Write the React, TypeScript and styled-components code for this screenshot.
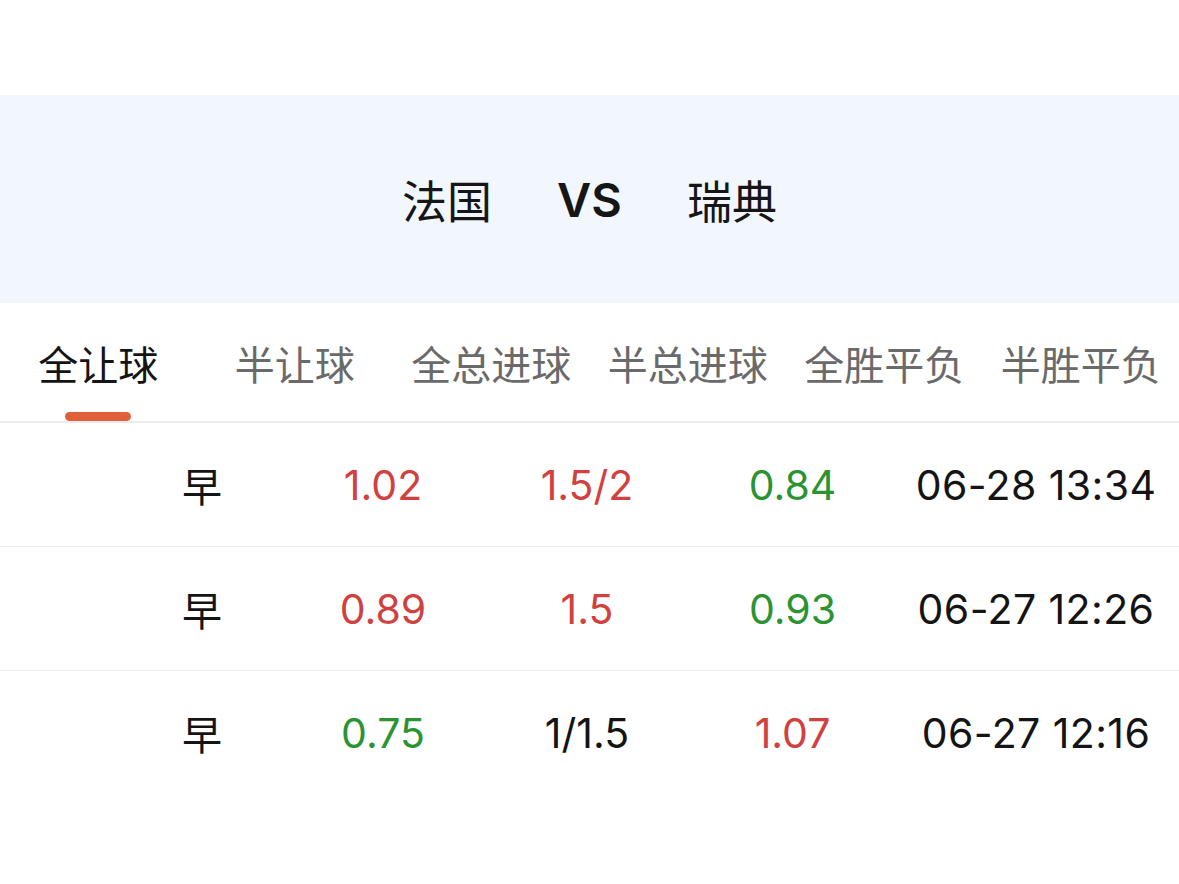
import styled, { createGlobalStyle } from 'styled-components';

const GlobalStyle = createGlobalStyle`
    body {
        margin: 0;
        background: #fff;
        font-family: Inter, "Noto Sans CJK SC", sans-serif;
        color: #111;
    }
`;

const Page = styled.div`
    width: 1179px;
    display: flex;
    flex-direction: column;
`;

const TopBar = styled.div`
    height: 95px;
`;

// Match header.

const MatchHeader = styled.header`
    height: 208px;
    background-color: #f2f7fd;
    display: flex;
    align-items: center;
    justify-content: center;
    gap: 65px;
`;

const TeamName = styled.span`
    font-family: "Noto Sans CJK SC", sans-serif;
    font-size: 45px;
    font-weight: 400;
    color: #161616;
`;

const Versus = styled.span`
    font-family: Inter, sans-serif;
    font-size: 47px;
    font-weight: 600;
    color: #161616;
`;

// Tabs.

const TabBar = styled.nav`
    display: flex;
    height: 120px;
    border-bottom: 2px solid #ececec;
    box-sizing: border-box;
`;

const Tab = styled.div`
    flex: 1;
    display: flex;
    flex-direction: column;
    align-items: center;
    padding-top: 40px;
`;

const TabLabel = styled.span<{ $active?: boolean }>`
    font-family: "Noto Sans CJK SC", sans-serif;
    font-size: 40px;
    line-height: 40px;
    white-space: nowrap;
    color: ${(p) => (p.$active ? '#141414' : '#6a6a6a')};
`;

const TabIndicator = styled.div<{ $active?: boolean }>`
    margin-top: 29px;
    width: 66px;
    height: 9px;
    border-radius: 5px;
    background-color: ${(p) => (p.$active ? '#e0603c' : 'transparent')};
`;

// Odds rows.

const OddsRow = styled.div`
    display: grid;
    grid-template-columns: 164px 198px 210px 201px 1fr;
    align-items: center;
    height: 124px;
    padding-left: 120px;
    border-bottom: 1px solid #ececec;
    box-sizing: border-box;

    &:last-child {
        border-bottom: none;
    }
`;

const Cell = styled.span<{ $tone?: 'red' | 'green' | 'plain' }>`
    text-align: center;
    font-family: Inter, "Noto Sans CJK SC", sans-serif;
    font-size: 41px;
    white-space: nowrap;
    color: ${(p) => (p.$tone === 'red' ? '#d0413f' : p.$tone === 'green' ? '#2b9332' : '#141414')};
`;

const Stage = styled(Cell)`
    font-family: "Noto Sans CJK SC", sans-serif;
    font-size: 40px;
`;

const Time = styled(Cell)`
    letter-spacing: 0.4px;
`;

type Tone = 'red' | 'green' | 'plain';

type Odds = {
    home: [string, Tone];
    line: [string, Tone];
    away: [string, Tone];
    time: string;
};

const tabs = ['全让球', '半让球', '全总进球', '半总进球', '全胜平负', '半胜平负'];

const rows: Odds[] = [
    { home: ['1.02', 'red'], line: ['1.5/2', 'red'], away: ['0.84', 'green'], time: '06-28 13:34' },
    { home: ['0.89', 'red'], line: ['1.5', 'red'], away: ['0.93', 'green'], time: '06-27 12:26' },
    { home: ['0.75', 'green'], line: ['1/1.5', 'plain'], away: ['1.07', 'red'], time: '06-27 12:16' },
];

const App = () => {
    return (
        <>
            <GlobalStyle />
            <Page>
                <TopBar />
                <MatchHeader>
                    <TeamName>法国</TeamName>
                    <Versus>VS</Versus>
                    <TeamName>瑞典</TeamName>
                </MatchHeader>

                <TabBar>
                    {tabs.map((t, i) => (
                        <Tab key={t}>
                            <TabLabel $active={i === 0}>{t}</TabLabel>
                            <TabIndicator $active={i === 0} />
                        </Tab>
                    ))}
                </TabBar>

                <div>
                    {rows.map((r) => (
                        <OddsRow key={r.time}>
                            <Stage>早</Stage>
                            <Cell $tone={r.home[1]}>{r.home[0]}</Cell>
                            <Cell $tone={r.line[1]}>{r.line[0]}</Cell>
                            <Cell $tone={r.away[1]}>{r.away[0]}</Cell>
                            <Time>{r.time}</Time>
                        </OddsRow>
                    ))}
                </div>
            </Page>
        </>
    );
};

export default App;
